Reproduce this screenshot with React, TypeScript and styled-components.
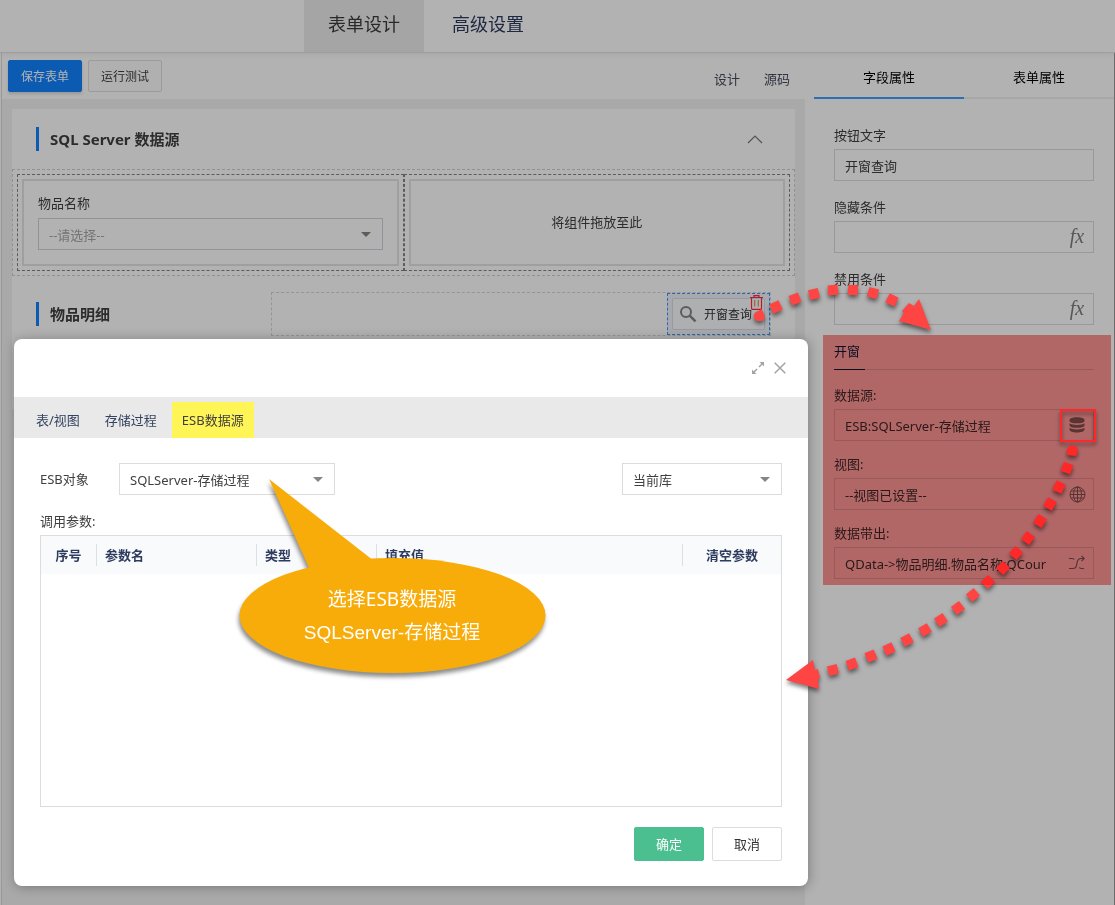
import React from "react";
import styled, { createGlobalStyle, css } from "styled-components";

const GlobalStyle = createGlobalStyle`
  *, *::before, *::after { box-sizing: border-box; }
  html, body { margin: 0; padding: 0; }
  body, button, input, select {
    font-family: "Noto Sans", "Noto Sans CJK SC", sans-serif;
    font-size: 13px;
    color: #404040;
  }
  body { line-height: 20px; background: #fff; }
`;

/* ---------- page frame ---------- */

const Page = styled.div`
  position: relative;
  display: flex;
  flex-direction: column;
  min-height: 100vh;
  background: #fff;
`;

const Header = styled.header`
  display: flex;
  gap: 4px;
  height: 53px;
  padding-left: 304px;
  border-bottom: 1px solid #e2e2e2;
  box-shadow: 0 1px 6px rgba(0, 0, 0, 0.08);
`;

const HeaderTab = styled.a<{ $active?: boolean }>`
  display: flex;
  align-items: center;
  padding: 0 24px 4px;
  font-size: 18px;
  text-decoration: none;
  color: ${(p) => (p.$active ? "#3c3c3c" : "#2c3a5c")};
  background: ${(p) => (p.$active ? "#ececec" : "transparent")};
`;

const Workspace = styled.div`
  flex: 1;
  display: flex;
  padding-left: 1px;
`;

const Designer = styled.main`
  flex: 1;
  min-width: 0;
  display: flex;
  flex-direction: column;
  border-left: 1px solid #dcdcdc;
`;

const Toolbar = styled.div`
  display: flex;
  align-items: center;
  height: 46px;
  padding: 0 15px 0 6px;
  gap: 6px;
`;

const ToolButton = styled.button<{ $primary?: boolean }>`
  width: 74px;
  height: 32px;
  padding: 0;
  font-size: 12px;
  border-radius: 2px;
  border: 1px solid #dfdfdf;
  background: #fcfcfc;
  ${(p) =>
    p.$primary &&
    css`
      color: #fff;
      border-color: #1283ff;
      background: #1283ff;
      box-shadow: 0 2px 3px rgba(0, 0, 0, 0.15);
    `}
`;

const ModeLinks = styled.nav`
  display: flex;
  gap: 24px;
  margin-left: auto;
  padding-top: 6px;
`;

const ModeLink = styled.a`
  color: #464a5c;
  text-decoration: none;
`;

const Canvas = styled.div`
  flex: 1;
  padding: 10px 10px 0;
  background: #f2f2f2;
`;

const FormSheet = styled.div`
  min-height: 300px;
  background: #fff;
`;

const SectionHead = styled.div<{ $tall?: boolean }>`
  display: flex;
  align-items: center;
  height: ${(p) => (p.$tall ? "76px" : "60px")};
  padding: 0 24px;
`;

const SectionTitle = styled.h2`
  margin: 0;
  padding-left: 11px;
  border-left: 3px solid #1283ff;
  font-size: 15px;
  font-weight: 700;
  line-height: 24px;
`;

const CollapseButton = styled.button`
  display: flex;
  margin-left: auto;
  margin-right: 8px;
  padding: 0;
  border: 0;
  background: none;
  color: #777;
`;

const GridFrame = styled.div`
  display: flex;
  padding: 4px;
  border: 1px dashed #d0d0d0;
`;

const GridCell = styled.div`
  flex: 1;
  min-width: 0;
  padding: 4px;
  border: 1px dashed #838383;
`;

const CellBox = styled.div<{ $empty?: boolean }>`
  height: 87px;
  padding: 12px 14px 14px;
  border: 2px solid #e4e4e4;
  ${(p) =>
    p.$empty &&
    css`
      display: flex;
      align-items: center;
      justify-content: center;
    `}
`;

const FieldLabel = styled.label<{ $gap: number }>`
  display: block;
  margin-bottom: ${(p) => p.$gap}px;
`;

/* ---------- select ---------- */

const SelectWrap = styled.div<{ $width?: string }>`
  position: relative;
  width: ${(p) => p.$width || "100%"};
  &::after {
    content: "";
    position: absolute;
    right: 12px;
    top: 14px;
    border: 5px solid transparent;
    border-top-color: #858585;
    border-bottom: 0;
    pointer-events: none;
  }
`;

const SelectBox = styled.select<{ $muted?: boolean; $edge?: string }>`
  appearance: none;
  display: block;
  width: 100%;
  height: 32px;
  padding: 1px 10px 0;
  border: 1px solid ${(p) => p.$edge || "#dcdcdc"};
  border-radius: 0;
  background: transparent;
  color: ${(p) => (p.$muted ? "#a8a8a8" : "#404040")};
`;

/* ---------- detail toolbar row ---------- */

const DropStrip = styled.div`
  display: flex;
  justify-content: flex-end;
  flex: 1;
  margin-left: 161px;
  height: 44px;
  border: 1px dashed #d6d6d6;
`;

const SelectedItem = styled.div`
  position: relative;
  width: 103px;
  height: 42px;
  padding: 4px;
  border: 1px dashed #3f96f5;
  background: #eef4fc;
`;

const QueryButton = styled.button`
  display: flex;
  align-items: center;
  gap: 6px;
  width: 93px;
  height: 32px;
  padding: 0 7px;
  font-size: 12px;
  white-space: nowrap;
  border: 1px solid #dadde2;
  background: #fafbfd;
  border-radius: 2px;
  color: #333;
`;

const TrashButton = styled.button`
  position: absolute;
  top: 1px;
  right: 6px;
  display: flex;
  padding: 0;
  border: 0;
  background: none;
`;

const Rule = styled.div`
  height: 1px;
  margin-left: 24px;
  margin-right: 24px;
  background: #d4d4d4;
`;

/* ---------- property panel ---------- */

const Panel = styled.aside`
  width: 310px;
  border-right: 1px solid #9a9a9a;
`;

const PanelTabs = styled.div`
  display: flex;
  margin-left: 9px;
`;

const PanelTab = styled.button<{ $active?: boolean }>`
  flex: 1;
  height: 46px;
  padding: 2px 0 0;
  border: 0;
  border-bottom: 2px solid ${(p) => (p.$active ? "#409eff" : "#f0f0f0")};
  background: none;
  color: #000;
`;

const PanelBody = styled.div`
  display: flex;
  flex-direction: column;
  gap: 16px;
  padding: 26px 20px 0 29px;
`;

const LookupGroup = styled.section`
  display: flex;
  flex-direction: column;
  gap: 13px;
  padding: 17px 20px 0 29px;
`;

const LookupTitle = styled.h3`
  margin: 0 0 2px;
  height: 28px;
  font-size: 13px;
  font-weight: 400;
  line-height: 18px;
  border-bottom: 1px solid #dcdcdc;
  color: #102458;
  span {
    display: block;
    width: 31px;
    height: 28px;
    border-bottom: 1px solid #102458;
  }
`;

const InputFrame = styled.div`
  display: flex;
  align-items: center;
  height: 32px;
  border: 1px solid #dcdcdc;
`;

const TextInput = styled.input`
  flex: 1;
  min-width: 0;
  height: 30px;
  padding: 0 0 0 10px;
  border: 0;
  background: transparent;
`;

const InputAction = styled.button`
  display: flex;
  align-items: center;
  justify-content: center;
  width: 32px;
  height: 30px;
  padding: 0;
  border: 0;
  background: none;
  color: #7d7d7d;
`;

const Fx = styled.span`
  font-family: "Liberation Serif", serif;
  font-style: italic;
  font-size: 20px;
  line-height: 20px;
  padding-bottom: 2px;
`;

/* ---------- mask and dialog ---------- */

const Mask = styled.div`
  position: absolute;
  inset: 0;
  background: rgba(0, 0, 0, 0.3);
`;

const Dialog = styled.div`
  position: absolute;
  top: 339px;
  left: 14px;
  right: 307px;
  border-radius: 8px;
  background: #fff;
  box-shadow: 1px 1px 12px rgba(0, 0, 0, 0.3);
`;

const DialogHead = styled.div`
  display: flex;
  align-items: center;
  justify-content: flex-end;
  gap: 9px;
  height: 58px;
  padding-right: 22px;
`;

const IconButton = styled.button`
  display: flex;
  padding: 0;
  border: 0;
  background: none;
  color: #a3a3a3;
`;

const DialogTabs = styled.div`
  display: flex;
  align-items: flex-end;
  gap: 5px;
  height: 41px;
  padding-left: 12px;
  background: #e9e9e9;
`;

const DialogTab = styled.button<{ $active?: boolean }>`
  height: 36px;
  padding: 0 10px 2px;
  border: 0;
  background: ${(p) => (p.$active ? "#fff556" : "transparent")};
  color: ${(p) => (p.$active ? "#404040" : "#35425f")};
`;

const DialogBody = styled.div`
  padding: 25px 26px;
`;

const FilterRow = styled.div`
  display: flex;
  align-items: center;
  margin-bottom: 16px;
  label {
    width: 79px;
  }
`;

const Spacer = styled.div`
  flex: 1;
`;

const TableFrame = styled.div`
  height: 272px;
  margin: 4px 0 20px;
  border: 1px solid #dcdcdc;
`;

const ParamTable = styled.table`
  width: 100%;
  table-layout: fixed;
  border-collapse: collapse;
  background: #f9fafc;
`;

const Th = styled.th<{ $width?: number; $center?: boolean; $last?: boolean }>`
  width: ${(p) => (p.$width ? p.$width + "px" : "auto")};
  height: 38px;
  padding: 0;
  font-weight: 700;
  color: #2c3b5e;
  text-align: ${(p) => (p.$center ? "center" : "left")};
  span {
    display: block;
    height: 22px;
    line-height: 22px;
    padding-left: ${(p) => (p.$center ? 0 : 8)}px;
    border-right: ${(p) => (p.$last ? "0" : "1px solid #dcdfe4")};
  }
`;

const DialogFoot = styled.div`
  display: flex;
  justify-content: flex-end;
  gap: 8px;
`;

const FootButton = styled.button<{ $primary?: boolean }>`
  width: 70px;
  height: 34px;
  padding: 0 0 2px;
  border-radius: 2px;
  border: 1px solid ${(p) => (p.$primary ? "#4bbf8f" : "#dcdcdc")};
  background: ${(p) => (p.$primary ? "#4bbf8f" : "#fff")};
  color: ${(p) => (p.$primary ? "#fff" : "#333")};
`;

/* ---------- annotations ---------- */

const Callout = styled.div`
  position: absolute;
  top: 139px;
  left: 220px;
  width: 320px;
  height: 210px;
  pointer-events: none;
  svg {
    display: block;
    overflow: visible;
    filter: drop-shadow(-1px 4px 2px rgba(0, 0, 0, 0.45));
  }
`;

const CalloutText = styled.div`
  position: absolute;
  top: 105px;
  left: 5px;
  width: 306px;
  font-size: 19px;
  line-height: 33px;
  text-align: center;
  color: #fff;
  p {
    margin: 0;
  }
  p + p {
    font-family: "Liberation Sans", "Noto Sans CJK SC", sans-serif;
  }
`;

const Arrows = styled.svg`
  position: absolute;
  top: 0;
  right: 0;
  pointer-events: none;
  filter: drop-shadow(0 3px 2px rgba(0, 0, 0, 0.5));
`;

const Highlight = styled.div`
  position: absolute;
  top: 335px;
  right: 4px;
  width: 288px;
  height: 250px;
  background: #ff9494;
  mix-blend-mode: multiply;
  pointer-events: none;
`;

/* ---------- icons ---------- */

const ChevronUp = () => (
  <svg width="16" height="9" viewBox="0 0 16 9" fill="none" stroke="currentColor" strokeWidth="1.2">
    <path d="M1 8 8 1 15 8" />
  </svg>
);

const SearchIcon = () => (
  <svg width="18" height="18" viewBox="0 0 18 18" fill="none" stroke="#858585" strokeWidth="2">
    <circle cx="6" cy="7" r="5" />
    <path d="m9.7 10.7 5.8 5.6" strokeWidth="2.5" />
  </svg>
);

const TrashIcon = () => (
  <svg width="13" height="15" viewBox="0 0 13 15" fill="none" stroke="#ff2846" strokeWidth="1.2">
    <path d="M0 2.5h13M4 2.4V.7h5v1.7M1.5 2.800v10q0 1.600 1 1.600h8q1 0 1-1.600v-10" />
    <path d="M4.700 5v6.500M8.300 5v6.500" stroke="#f0884a" />
  </svg>
);

const ExpandIcon = () => (
  <svg width="14" height="14" viewBox="0 0 14 14" fill="none" stroke="currentColor" strokeWidth="1.5">
    <path d="M12 2 8 6M2 12l4-4" />
    <path d="M8.5 1H13v4.5L11.6 4 10 2.400ZM5.500 13H1V8.500L2.400 10 4 11.600Z" fill="currentColor" stroke="none" />
  </svg>
);

const CloseIcon = () => (
  <svg width="12" height="12" viewBox="0 0 12 12" fill="none" stroke="currentColor" strokeWidth="1.5">
    <path d="m.7.7 10.600 10.600M11.300.7.7 11.300" />
  </svg>
);

const DatabaseIcon = () => (
  <svg width="16" height="16" viewBox="0 0 16 16" fill="#808080">
    <path d="M.5 3C.5 1.400 3.600.3 8 .3s7.500 1.100 7.500 2.700v1C15.500 5.400 12.400 6.300 8 6.300S.5 5.400.5 4Z" />
    <path d="M.5 6.200C2 7.400 4.800 7.900 8 7.900s6-.5 7.500-1.700v2.200c0 1.400-3.100 2.300-7.500 2.300S.5 9.800.5 8.400Z" />
    <path d="M.5 10.800c1.500 1.200 4.300 1.700 7.500 1.700s6-.5 7.500-1.700v1.900c0 1.600-3.100 2.800-7.500 2.800s-7.500-1.200-7.500-2.800Z" />
  </svg>
);

const GlobeIcon = () => (
  <svg width="17" height="17" viewBox="0 0 17 17" fill="none" stroke="currentColor" strokeWidth="1">
    <circle cx="8.5" cy="8.5" r="7.5" />
    <ellipse cx="8.5" cy="8.5" rx="4" ry="7.5" />
    <path d="M8.500 1v15M1 8.500h15M2 5h13M2 12h13" />
  </svg>
);

const ShuffleIcon = () => (
  <svg width="16" height="16" viewBox="0 0 16 16" fill="none" stroke="currentColor" strokeWidth="1.2">
    <path d="M0 13.500h3.500c3.500 0 4-2 4.500-5.500s1.500-4.500 4-4.500h3M0 3.500h3q1.500 0 2.300 1M10.200 12.500q.8 1 2.300 1H15" />
    <path d="m12.500.8 2.700 2.700-2.700 2.700" />
  </svg>
);

type Dot = [number, number, number];

// x, y of each dash's centre and its slope in degrees
const upperDots: Dot[] = [
  [776, 307, -25],
  [795, 299, -20],
  [814, 294, -13],
  [833, 290, -5],
  [853, 290, 4],
  [873, 293, 15],
  [892, 300, 26],
];

const lowerDots: Dot[] = [
  [1067, 468, 109],
  [1059, 487, 115],
  [1050, 504, 119],
  [1040, 521, 123],
  [1028, 538, 126],
  [1016, 553, 130],
  [1003, 568, 133],
  [988, 582, 136],
  [973, 595, 140],
  [958, 608, 143],
  [941, 620, 147],
  [925, 630, 150],
  [907, 640, 152],
  [889, 649, 155],
  [871, 656, 157],
  [852, 664, 160],
  [833, 670, 165],
];

const Dash = ({ dot: [x, y, angle] }: { dot: Dot }) => (
  <rect x={x - 5} y={y - 5} width="10" height="10" transform={`rotate(${angle} ${x} ${y})`} />
);

const ArrowLayer = () => (
  <Arrows width="1115" height="720" viewBox="0 0 1115 720" fill="#ff4444" aria-hidden="true">
    <path d="M758 321a5 5 0 0 1-2-9l6-3 3 9-3 3Z" />
    {upperDots.map((d) => (
      <Dash key={d[0]} dot={d} />
    ))}
    <path d="m931 330-32-9 5-8-2-2 7-8 5 3 5-7Z" />
    <path d="M1067 452a5 5 0 0 1 11-2l-2 6-9-1Z" />
    {lowerDots.map((d) => (
      <Dash key={d[0]} dot={d} />
    ))}
    <path d="m786 680 27-20 2 10 3-1 2 9-2 1 1 10Z" />
    <rect x="1061" y="410" width="34" height="31" fill="none" stroke="#ff4444" strokeWidth="2" />
  </Arrows>
);

type PropertyProps = { id: string; label: string; value: string; action?: string; icon?: React.ReactNode };

const Property = ({ id, label, value, action, icon }: PropertyProps) => (
  <div>
    <FieldLabel htmlFor={id} $gap={4}>
      {label}
    </FieldLabel>
    <InputFrame>
      <TextInput id={id} defaultValue={value} />
      {icon && <InputAction aria-label={action}>{icon}</InputAction>}
    </InputFrame>
  </div>
);

export default function App() {
  return (
    <Page>
      <GlobalStyle />
      <Header>
        <HeaderTab href="#design" $active>
          表单设计
        </HeaderTab>
        <HeaderTab href="#advanced">高级设置</HeaderTab>
      </Header>
      <Workspace>
        <Designer>
          <Toolbar>
            <ToolButton $primary>保存表单</ToolButton>
            <ToolButton>运行测试</ToolButton>
            <ModeLinks>
              <ModeLink href="#view">设计</ModeLink>
              <ModeLink href="#source">源码</ModeLink>
            </ModeLinks>
          </Toolbar>
          <Canvas>
            <FormSheet>
              <SectionHead>
                <SectionTitle>SQL Server 数据源</SectionTitle>
                <CollapseButton aria-label="收起">
                  <ChevronUp />
                </CollapseButton>
              </SectionHead>
              <GridFrame>
                <GridCell>
                  <CellBox>
                    <FieldLabel htmlFor="item-name" $gap={5}>
                      物品名称
                    </FieldLabel>
                    <SelectWrap>
                      <SelectBox id="item-name" $muted $edge="#d2d3da">
                        <option>--请选择--</option>
                      </SelectBox>
                    </SelectWrap>
                  </CellBox>
                </GridCell>
                <GridCell>
                  <CellBox $empty>将组件拖放至此</CellBox>
                </GridCell>
              </GridFrame>
              <SectionHead $tall>
                <SectionTitle>物品明细</SectionTitle>
                <DropStrip>
                  <SelectedItem>
                    <QueryButton>
                      <SearchIcon />
                      开窗查询
                    </QueryButton>
                    <TrashButton aria-label="删除">
                      <TrashIcon />
                    </TrashButton>
                  </SelectedItem>
                </DropStrip>
              </SectionHead>
              <Rule />
            </FormSheet>
          </Canvas>
        </Designer>
        <Panel>
          <PanelTabs>
            <PanelTab $active>字段属性</PanelTab>
            <PanelTab>表单属性</PanelTab>
          </PanelTabs>
          <PanelBody>
            <Property id="btn-text" label="按钮文字" value="开窗查询" />
            <Property id="hide-if" label="隐藏条件" value="" action="公式" icon={<Fx>fx</Fx>} />
            <Property id="disable-if" label="禁用条件" value="" action="公式" icon={<Fx>fx</Fx>} />
          </PanelBody>
          <LookupGroup>
            <LookupTitle>
              <span>开窗</span>
            </LookupTitle>
            <Property
              id="source"
              label="数据源:"
              value="ESB:SQLServer-存储过程"
              action="选择数据源"
              icon={<DatabaseIcon />}
            />
            <Property id="view" label="视图:" value="--视图已设置--" action="设置视图" icon={<GlobeIcon />} />
            <Property
              id="carry"
              label="数据带出:"
              value="QData->物品明细.物品名称;QCour"
              action="设置带出"
              icon={<ShuffleIcon />}
            />
          </LookupGroup>
        </Panel>
      </Workspace>

      <Mask />

      <Dialog role="dialog" aria-label="ESB数据源">
        <DialogHead>
          <IconButton aria-label="最大化">
            <ExpandIcon />
          </IconButton>
          <IconButton aria-label="关闭">
            <CloseIcon />
          </IconButton>
        </DialogHead>
        <DialogTabs>
          <DialogTab>表/视图</DialogTab>
          <DialogTab>存储过程</DialogTab>
          <DialogTab $active>ESB数据源</DialogTab>
        </DialogTabs>
        <DialogBody>
          <FilterRow>
            <label htmlFor="esb-object">ESB对象</label>
            <SelectWrap $width="216px">
              <SelectBox id="esb-object">
                <option>SQLServer-存储过程</option>
              </SelectBox>
            </SelectWrap>
            <Spacer />
            <SelectWrap $width="160px">
              <SelectBox aria-label="数据库">
                <option>当前库</option>
              </SelectBox>
            </SelectWrap>
          </FilterRow>
          <div>调用参数:</div>
          <TableFrame>
            <ParamTable>
              <thead>
                <tr>
                  <Th $width={56} $center>
                    <span>序号</span>
                  </Th>
                  <Th $width={160}>
                    <span>参数名</span>
                  </Th>
                  <Th $width={120}>
                    <span>类型</span>
                  </Th>
                  <Th>
                    <span>填充值</span>
                  </Th>
                  <Th $width={98} $center $last>
                    <span>清空参数</span>
                  </Th>
                </tr>
              </thead>
            </ParamTable>
          </TableFrame>
          <DialogFoot>
            <FootButton $primary>确定</FootButton>
            <FootButton>取消</FootButton>
          </DialogFoot>
        </DialogBody>
        <Callout>
          <svg width="320" height="210" viewBox="0 0 320 210" fill="#f8ac0a" aria-hidden="true">
            <path d="M35 1 76 92 140 83Z" />
            <ellipse cx="158.5" cy="137.5" rx="153" ry="57.5" />
          </svg>
          <CalloutText>
            <p>选择ESB数据源</p>
            <p>SQLServer-存储过程</p>
          </CalloutText>
        </Callout>
      </Dialog>

      <ArrowLayer />
      <Highlight />
    </Page>
  );
}
